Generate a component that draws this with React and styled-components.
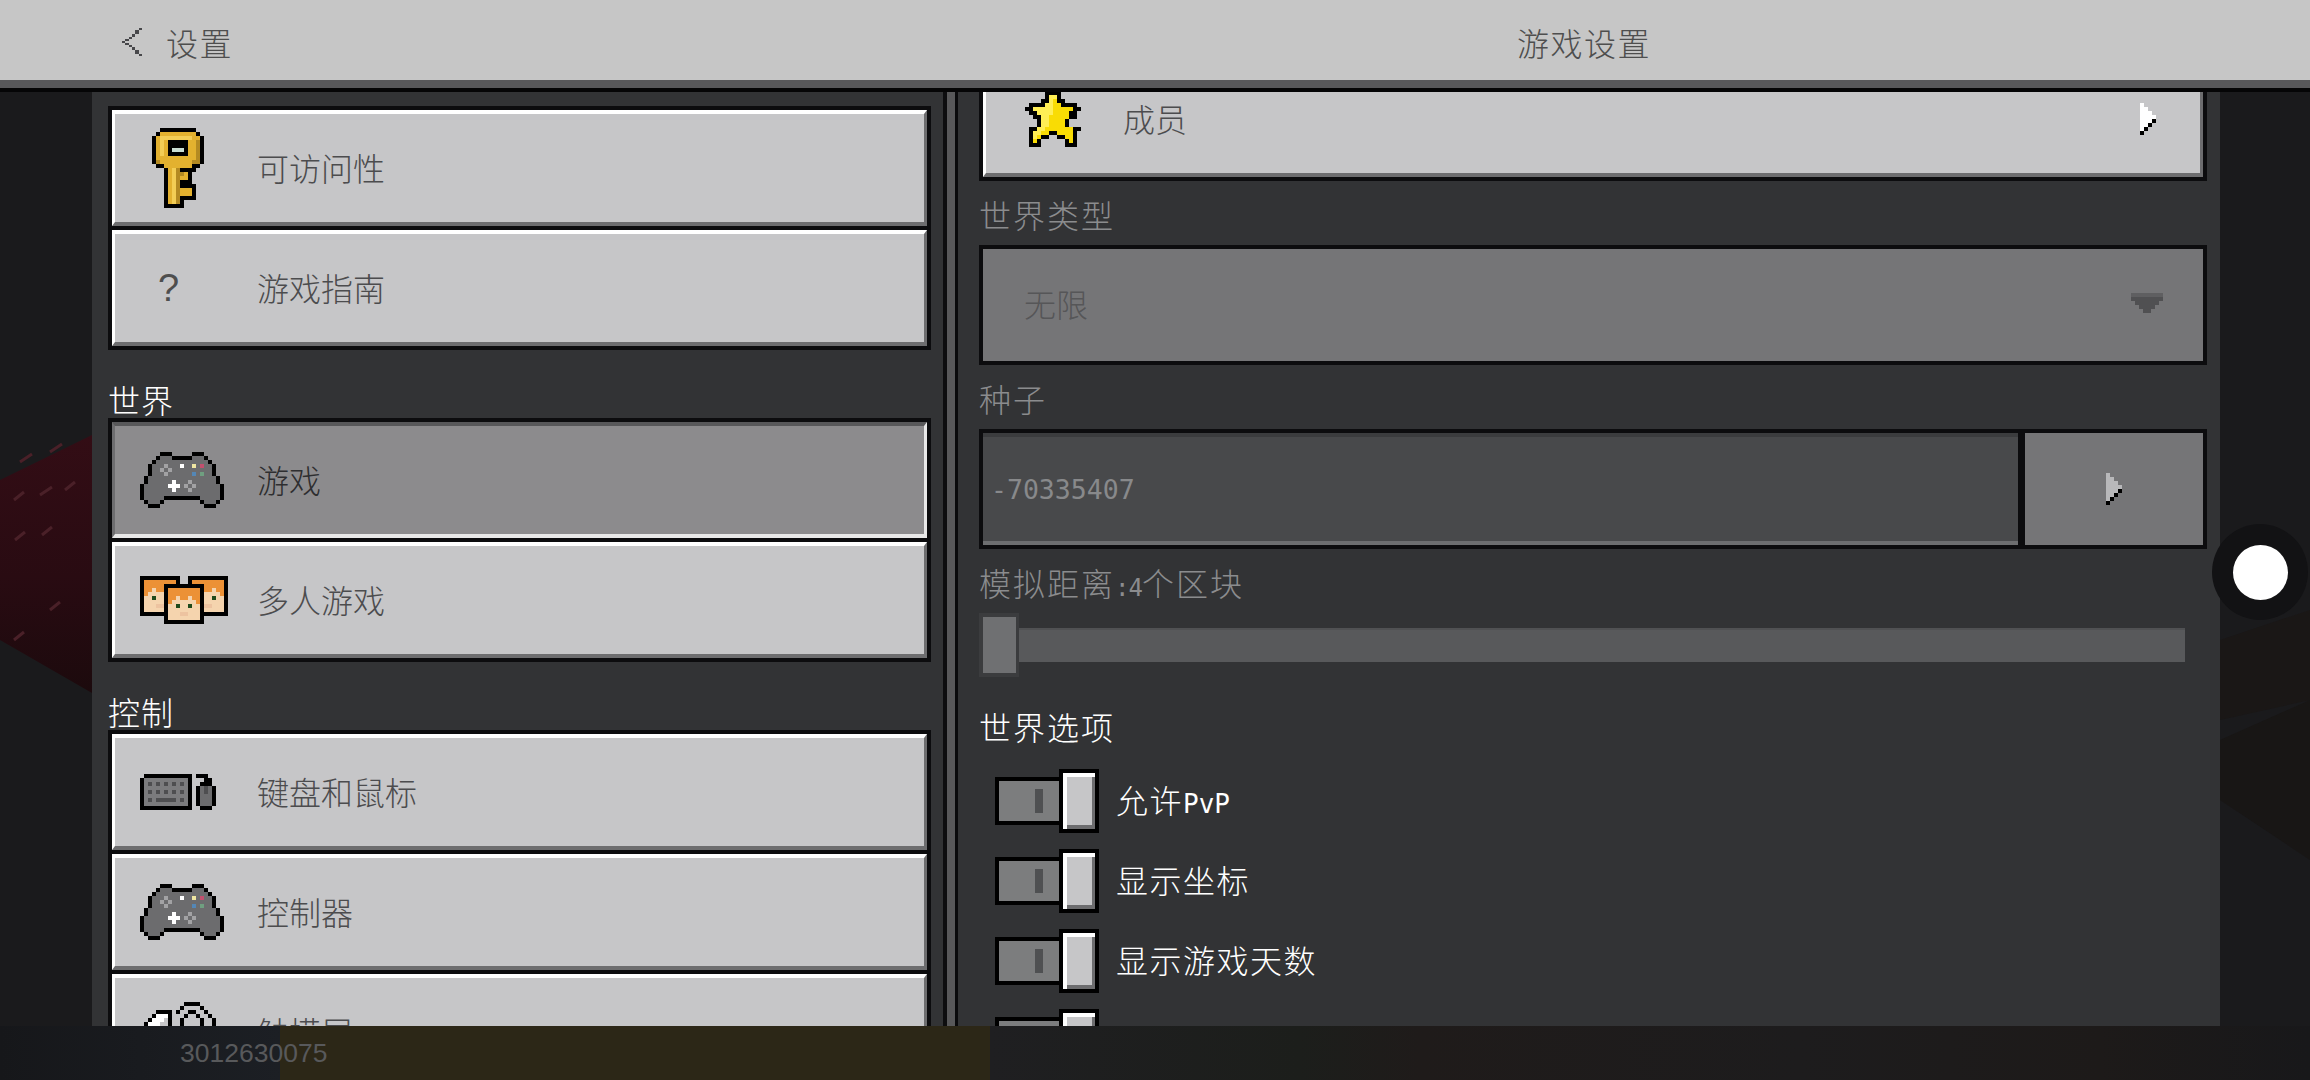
import React from "react";
import styled, { createGlobalStyle } from "styled-components";

const Global = createGlobalStyle`
  html, body { margin: 0; padding: 0; background: #1a1a1c; }
  * { box-sizing: border-box; }
`;

const CJK = `"Noto Sans CJK SC", "Noto Sans", sans-serif`;
const MONO = `"DejaVu Sans Mono", "Liberation Mono", monospace`;

const Page = styled.div`
  position: relative;
  width: 2310px;
  height: 1080px;
  overflow: hidden;
  display: flex;
  flex-direction: column;
  background: #1a1a1c;
  font-family: ${CJK};
  font-weight: 300;
`;

const Backdrop = styled.svg`
  position: absolute;
  inset: 0;
  z-index: 0;
`;

const Header = styled.header`
  position: relative;
  z-index: 1;
  flex: none;
  height: 92px;
  display: grid;
  grid-template-columns: 823px 1fr;
  align-items: center;
  padding: 4px 87px 0 122px;
  background: #c6c6c6;
  border-bottom: 12px solid #58585a;
  color: #4e4e4e;
  font-size: 32px;
  letter-spacing: 1.5px;
  line-height: 40px;
  &::after {
    content: "";
    position: absolute;
    left: 0;
    right: 0;
    bottom: -12px;
    height: 4px;
    background: #050506;
  }
`;

const BackLink = styled.div`
  display: flex;
  align-items: center;
  gap: 24px;
`;

const Title = styled.div`
  text-align: center;
`;

const Columns = styled.main`
  position: relative;
  z-index: 1;
  flex: none;
  height: 934px;
  display: flex;
  padding-left: 92px;
  padding-right: 90px;
`;

const LeftPanel = styled.section`
  width: 851px;
  flex: none;
  overflow: hidden;
  background: #323335;
  padding: 14px 12px 0 16px;
`;

const Divider = styled.div`
  width: 15px;
  flex: none;
  background: #58585a;
  border-left: 4px solid #0d0d0f;
  border-right: 3px solid #0a0a0c;
`;

const RightPanel = styled.section`
  flex: 1;
  overflow: hidden;
  background: #323335;
  padding: 0 13px 0 21px;
`;

const ScrolledContent = styled.div`
  margin-top: -35px;
`;

const Frame = styled.div`
  display: flex;
  flex-direction: column;
  gap: 4px;
  padding: 4px;
  background: #0c0c0e;
`;

const SideHeading = styled.h2`
  margin: 30px 0 0;
  color: #fff;
  font-size: 32px;
  font-weight: 300;
  line-height: 38px;
  letter-spacing: 1px;
`;

const MenuButton = styled.div`
  height: 116px;
  flex: none;
  display: flex;
  align-items: center;
  background: ${(p) => (p.$active ? "#8c8b8d" : "#c6c6c8")};
  border-style: solid;
  border-width: 4px 3px;
  border-color: ${(p) =>
    p.$active ? "#58585a #e8e8e8 #e8e8e8 #6d6d6f" : "#ffffff #6d6d6f #6d6d6f #ffffff"};
  color: ${(p) => (p.$active ? "#2e2e30" : "#4c4c4e")};
  font-size: 32px;
  letter-spacing: 0;
  line-height: 40px;
`;

const IconSlot = styled.div`
  flex: none;
  width: ${(p) => p.$width || 142}px;
  padding-left: ${(p) => p.$indent}px;
  display: flex;
  align-items: center;
`;

const ButtonLabel = styled.span`
  flex: 1;
  padding-bottom: 3px;
`;

const Chevron = styled.span`
  flex: none;
  display: flex;
  margin-right: 40px;
`;

const QuestionMark = styled.span`
  font-family: "Liberation Sans", sans-serif;
  font-size: 38px;
  line-height: 38px;
  color: #4e4e4e;
`;

const FieldLabel = styled.div`
  padding-top: 13px;
  padding-bottom: 11px;
  font-size: 32px;
  line-height: 40px;
  letter-spacing: 2px;
  color: #8b8c8e;
`;

const Latin = styled.span`
  font-family: ${MONO};
  font-size: ${(p) => p.$size}px;
  line-height: 0;
  letter-spacing: ${(p) => p.$track || 0}px;
`;

const SelectBox = styled.div`
  height: 112px;
  display: flex;
  align-items: center;
  justify-content: space-between;
  padding: 0 40px 5px 41px;
  background: #757577;
  color: #565658;
  font-size: 32px;
  letter-spacing: 0;
  line-height: 40px;
`;

const SeedFrame = styled(Frame)`
  flex-direction: row;
  gap: 7px;
`;

const SeedInput = styled.div`
  flex: 1;
  height: 112px;
  display: flex;
  align-items: center;
  padding-left: 8px;
  background: #48494b;
  border-top: 4px solid #3b3c3e;
  border-bottom: 4px solid #6d6e70;
  color: #88898b;
  font-family: ${MONO};
  font-size: 26.5px;
`;

const SeedButton = styled.div`
  flex: none;
  width: 178px;
  height: 112px;
  display: flex;
  align-items: center;
  justify-content: center;
  padding-left: 3px;
  background: #757577;
`;

const SliderRow = styled.div`
  display: flex;
  align-items: center;
  padding-right: 22px;
`;

const SliderThumb = styled.div`
  flex: none;
  width: 40px;
  height: 64px;
  background: #6f7072;
  border: 4px solid #3b3c3e;
  border-right-width: 3px;
`;

const SliderTrack = styled.div`
  flex: 1;
  height: 34px;
  background: #58595b;
  border-top: 2px solid #505153;
`;

const OptionsHeading = styled.h3`
  margin: 29px 0 23px;
  color: #fff;
  font-size: 32px;
  font-weight: 300;
  line-height: 40px;
  letter-spacing: 2px;
`;

const ToggleList = styled.div`
  display: flex;
  flex-direction: column;
  gap: 16px;
  padding-left: 16px;
`;

const ToggleRow = styled.div`
  display: flex;
  align-items: center;
  gap: 17px;
  color: #fff;
  font-size: 32px;
  letter-spacing: 1.5px;
  line-height: 40px;
`;

const ToggleText = styled.span`
  padding-bottom: 4px;
`;

const ToggleSwitch = styled.div`
  flex: none;
  display: flex;
  align-items: center;
`;

const ToggleTrack = styled.div`
  width: 64px;
  height: 48px;
  display: flex;
  align-items: center;
  justify-content: flex-end;
  padding-right: 16px;
  background: #7c7d7e;
  border: 4px solid #000;
  border-right: 0;
`;

const ToggleMarker = styled.div`
  width: 8px;
  height: 24px;
  background: #4f5052;
`;

const ToggleKnob = styled.div`
  width: 40px;
  height: 64px;
  border: 4px solid #000;
  background: #c6c6c8;
  box-shadow: inset 4px 4px 0 #fff, inset -3px -4px 0 #6d6d6f;
`;

const BottomStrip = styled.footer`
  position: relative;
  z-index: 1;
  flex: 1;
  display: flex;
  align-items: center;
  padding-left: 180px;
  background: linear-gradient(
    90deg,
    #16171a 0,
    #1c1f24 280px,
    #2c2717 280px,
    #2c2717 990px,
    #1f1f21 990px,
    #1c1e1b 1300px,
    #1f1b1a 1420px,
    #1d1c1d 1800px,
    #1d1a19 2100px,
    #18181a 100%
  );
  color: #58595b;
  font-family: "Liberation Sans", sans-serif;
  font-weight: 400;
  font-size: 26.5px;
`;

const HomeDot = styled.div`
  position: absolute;
  z-index: 2;
  left: 2212px;
  top: 524px;
  width: 96px;
  height: 96px;
  display: flex;
  align-items: center;
  justify-content: center;
  border-radius: 50%;
  background: #121214;
  &::after {
    content: "";
    width: 55px;
    height: 55px;
    border-radius: 50%;
    background: #fff;
  }
`;

const COLORS = {
  k: "#000000",
  y: "#e3b12f",
  d: "#b48a22",
  l: "#f3cd55",
  h: "#c9ddd3",
  s: "#f9dc04",
  S: "#ffee55",
  g: "#6c6c6e",
  a: "#a2a2a4",
  w: "#ffffff",
  Y: "#efe6a2",
  r: "#c2506e",
  b: "#5487b6",
  c: "#6f9f80",
  o: "#ec9136",
  f: "#f5d4ae",
  e: "#1f4a1c",
  p: "#edc3a0",
  n: "#47474a",
  t: "#7b7b7d",
  N: "#4e4e50",
  A: "#c6c6c8",
  B: "#b8b8ba",
  D: "#505052",
  E: "#5f5f61",
};

function Pixels({ map, x = 0, y = 0 }) {
  const rects = [];
  map.forEach((row, j) => {
    [...row].forEach((ch, i) => {
      if (COLORS[ch]) {
        rects.push(<rect key={`${i}-${j}`} x={x + i} y={y + j} width={1} height={1} fill={COLORS[ch]} />);
      }
    });
  });
  return <g>{rects}</g>;
}

const PixelSvg = ({ w, h, unit = 4, children }) => (
  <svg width={w * unit} height={h * unit} viewBox={`0 0 ${w} ${h}`} shapeRendering="crispEdges" display="block">
    {children}
  </svg>
);

const KEY = [
  "  kkkkkkkkk  ",
  " kyyyyyyyyyk ",
  "kyllllllllyyk",
  "kylykkkkkyydk",
  "kylykkkkkyydk",
  "kylykhhhkyydk",
  "kylykkkkkyydk",
  "kyyyyyyyyyydk",
  "kdyyyyyyyyddk",
  " kkyyyyyyykk ",
  "   kyldkkkk  ",
  "   kylddyk   ",
  "   kyldyyk   ",
  "   kyldkkk   ",
  "   kyldkkkk  ",
  "   kyldyyyk  ",
  "   kyldyyyk  ",
  "   kyldkkkk  ",
  "   kyldk     ",
  "   kkkkk     ",
];

const STAR = [
  "     kkkk     ",
  "     kSSk     ",
  "    kkSskk    ",
  " kkkkSSsskkkk ",
  "kkSSSSSssssskk",
  " kkSSSSsssskk ",
  "  kkSSssssskk ",
  "   kSSssssk   ",
  "   kSSssssk   ",
  " kkSSssssssskk",
  " kSSsskkssssk ",
  " kSskk  kkssk ",
  " ksk      ksk ",
  " kkk      kkk ",
];

const PAD = [
  "     kkk     kkk     ",
  "    kgggkkkkkgggk    ",
  "   kgggggggggggggk   ",
  "  kgggagggwggYgrggk  ",
  "  kggagaggggggggggk  ",
  "  kgggaggggggbgcggk  ",
  " kgggggggggggggggggk ",
  " kggggggwgggaggggggk ",
  "kggggggwwwgagaggggggk",
  "kgggggggwgggagggggggk",
  "kgggggggggggggggggggk",
  "kgggggkkkkkkkkkgggggk",
  " kgggk         kgggk ",
  "  kkk           kkk  ",
];

const FACE = [
  "kkkkkkkkkk",
  "kooooooook",
  "kooooooook",
  "koofoofook",
  "koffffffok",
  "kffeffeffk",
  "kffffffffk",
  "kfffppfffk",
  "kffffffffk",
  "kkkkkkkkkk",
];

const KEYBOARD = [
  " kkkkkkkkkkkk kkk   ",
  "ktttttttttttk   kk  ",
  "ktNtNtNtNtNtk  kkk  ",
  "ktttttttttttk kgNgk ",
  "ktNtNtNtNtNtk kgNgk ",
  "ktttttttttttk kgggk ",
  "ktNtNNNNNtNtk kgggk ",
  "ktttttttttttk kgggk ",
  "kkkkkkkkkkkkk  kkk  ",
];

const TOUCH = [
  "           kkkk    ",
  "          k    k   ",
  "    kkkk k  kk  k  ",
  "   kwwwk   k  k  k ",
  "  kwwwAk  k    k  k",
  " kwwwAAk  k    k  k",
];

const BACK = [
  "     n",
  "    n ",
  "    n ",
  "   n  ",
  "  n   ",
  " n    ",
  "n     ",
  " n    ",
  "  n   ",
  "   n  ",
  "    n ",
  "    n ",
  "     n",
];

const ARROW = [
  "w    ",
  "ww   ",
  "www  ",
  "wwww ",
  "wwwk ",
  "wwk  ",
  "wk   ",
  "k    ",
];

const SEED_ARROW = ARROW.map((r) => r.replace(/w/g, "B"));

const DROPDOWN = [
  "EEEEEEEE",
  "DDDDDDDD",
  " DDDDDD ",
  "  DDDD  ",
  "   DD   ",
];

const BackIcon = () => (
  <svg width="20" height="28" viewBox="0 0 6 13" preserveAspectRatio="none" shapeRendering="crispEdges" display="block">
    <Pixels map={BACK} />
  </svg>
);

const KeyIcon = () => <PixelSvg w={13} h={20}><Pixels map={KEY} /></PixelSvg>;
const StarIcon = () => <PixelSvg w={14} h={14}><Pixels map={STAR} /></PixelSvg>;
const PadIcon = () => <PixelSvg w={21} h={14}><Pixels map={PAD} /></PixelSvg>;
const KeyboardIcon = () => <PixelSvg w={20} h={9}><Pixels map={KEYBOARD} /></PixelSvg>;
const TouchIcon = () => <PixelSvg w={19} h={15}><Pixels map={TOUCH} /></PixelSvg>;
const FacesIcon = () => (
  <PixelSvg w={22} h={12}>
    <Pixels map={FACE} />
    <Pixels map={FACE} x={12} />
    <Pixels map={FACE} x={6} y={2} />
  </PixelSvg>
);
const ArrowIcon = ({ map }) => <PixelSvg w={5} h={8}><Pixels map={map} /></PixelSvg>;
const DropIcon = () => <PixelSvg w={8} h={5}><Pixels map={DROPDOWN} /></PixelSvg>;

function Menu({ icon, indent, label, active }) {
  return (
    <MenuButton $active={active}>
      <IconSlot $indent={indent}>{icon}</IconSlot>
      <ButtonLabel>{label}</ButtonLabel>
    </MenuButton>
  );
}

function Toggle({ children }) {
  return (
    <ToggleRow>
      <ToggleSwitch>
        <ToggleTrack><ToggleMarker /></ToggleTrack>
        <ToggleKnob />
      </ToggleSwitch>
      <ToggleText>{children}</ToggleText>
    </ToggleRow>
  );
}

export default function App() {
  return (
    <Page lang="zh-CN">
      <Global />
      <Backdrop width="2310" height="1080" viewBox="0 0 2310 1080">
        <defs>
          <linearGradient id="lava" x1="0" y1="0" x2="0" y2="1">
            <stop offset="0" stopColor="#330d15" />
            <stop offset="0.55" stopColor="#290b12" />
            <stop offset="1" stopColor="#1c0a0d" />
          </linearGradient>
        </defs>
        <rect width="2310" height="1080" fill="#1a1a1c" />
        <polygon points="0,480 92,435 92,693 0,640" fill="url(#lava)" />
        <g stroke="#4a2028" strokeWidth="3">
          <path d="M20 462l12-8M50 452l12-8M14 500l10-8M40 495l12-8M65 490l10-8M15 540l10-8M42 535l10-8M14 640l10-8M50 610l10-8" />
        </g>
        <polygon points="2220,640 2310,610 2310,700 2220,720" fill="#1a1716" />
        <polygon points="2220,740 2310,700 2310,860 2220,800" fill="#181615" />
      </Backdrop>
      <Header>
        <BackLink>
          <BackIcon />
          <span>设置</span>
        </BackLink>
        <Title>游戏设置</Title>
      </Header>
      <Columns>
        <LeftPanel>
          <Frame>
            <Menu icon={<KeyIcon />} indent={37} label="可访问性" />
            <Menu icon={<QuestionMark>?</QuestionMark>} indent={43} label="游戏指南" />
          </Frame>
          <SideHeading>世界</SideHeading>
          <Frame>
            <Menu active icon={<PadIcon />} indent={25} label="游戏" />
            <Menu icon={<FacesIcon />} indent={25} label="多人游戏" />
          </Frame>
          <SideHeading>控制</SideHeading>
          <Frame>
            <Menu icon={<KeyboardIcon />} indent={25} label="键盘和鼠标" />
            <Menu icon={<PadIcon />} indent={25} label="控制器" />
            <Menu icon={<TouchIcon />} indent={25} label="触摸屏" />
          </Frame>
        </LeftPanel>
        <Divider />
        <RightPanel>
          <ScrolledContent>
            <Frame>
              <MenuButton>
                <IconSlot $indent={39} $width={137}><StarIcon /></IconSlot>
                <ButtonLabel>成员</ButtonLabel>
                <Chevron><ArrowIcon map={ARROW} /></Chevron>
              </MenuButton>
            </Frame>
            <FieldLabel>世界类型</FieldLabel>
            <Frame>
              <SelectBox>
                <span>无限</span>
                <DropIcon />
              </SelectBox>
            </Frame>
            <FieldLabel>种子</FieldLabel>
            <SeedFrame>
              <SeedInput>-70335407</SeedInput>
              <SeedButton><ArrowIcon map={SEED_ARROW} /></SeedButton>
            </SeedFrame>
            <FieldLabel>
              模拟距离<Latin $size={24} $track={-1}>:4</Latin>个区块
            </FieldLabel>
            <SliderRow>
              <SliderThumb />
              <SliderTrack />
            </SliderRow>
            <OptionsHeading>世界选项</OptionsHeading>
            <ToggleList>
              <Toggle>允许<Latin $size={26}>PvP</Latin></Toggle>
              <Toggle>显示坐标</Toggle>
              <Toggle>显示游戏天数</Toggle>
              <Toggle>火焰蔓延</Toggle>
            </ToggleList>
          </ScrolledContent>
        </RightPanel>
      </Columns>
      <BottomStrip>3012630075</BottomStrip>
      <HomeDot />
    </Page>
  );
}
